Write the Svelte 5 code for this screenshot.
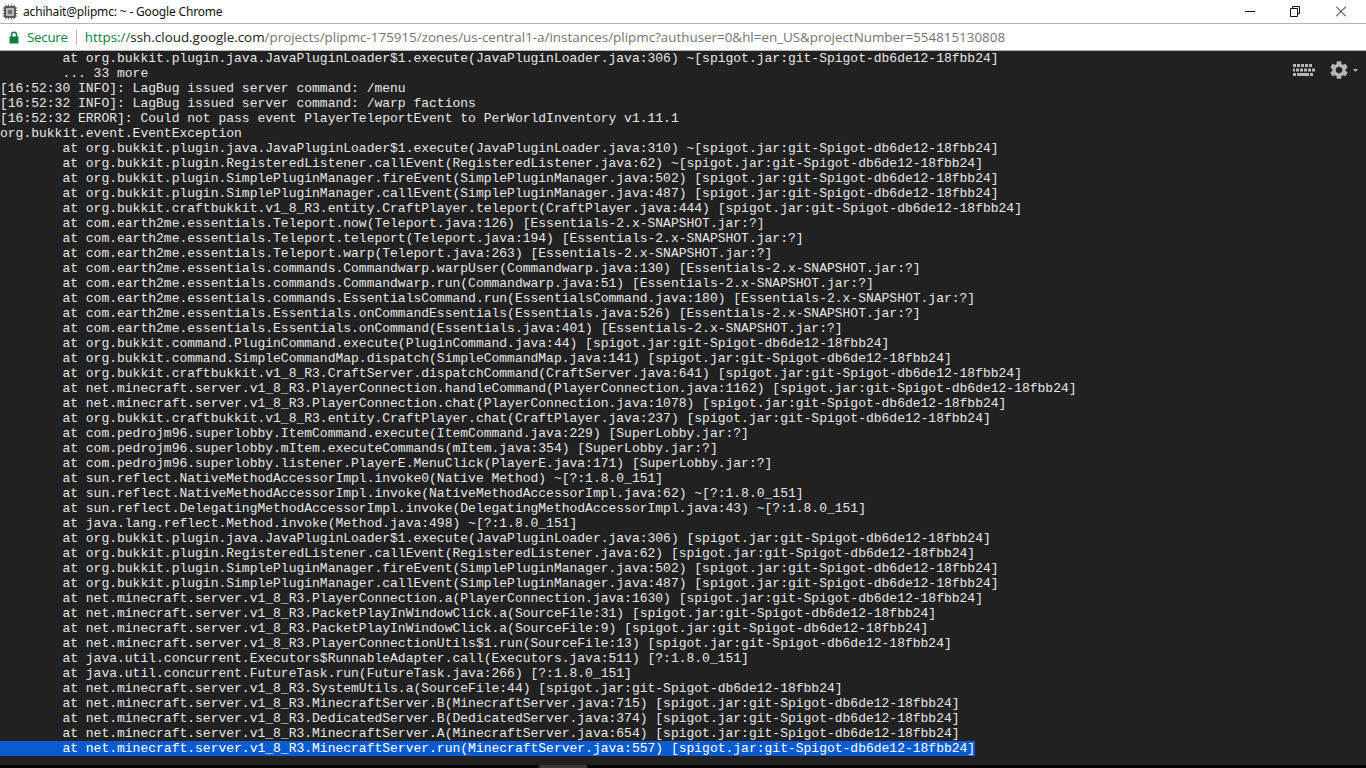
<script>
  const spigot = '[spigot.jar:git-Spigot-db6de12-18fbb24]';
  const ess = '[Essentials-2.x-SNAPSHOT.jar:?]';
  const sl = '[SuperLobby.jar:?]';
  const lines = [
    `        at org.bukkit.plugin.java.JavaPluginLoader$1.execute(JavaPluginLoader.java:306) ~${spigot}`,
    `        ... 33 more`,
    `[16:52:30 INFO]: LagBug issued server command: /menu`,
    `[16:52:32 INFO]: LagBug issued server command: /warp factions`,
    `[16:52:32 ERROR]: Could not pass event PlayerTeleportEvent to PerWorldInventory v1.11.1`,
    `org.bukkit.event.EventException`,
    `        at org.bukkit.plugin.java.JavaPluginLoader$1.execute(JavaPluginLoader.java:310) ~${spigot}`,
    `        at org.bukkit.plugin.RegisteredListener.callEvent(RegisteredListener.java:62) ~${spigot}`,
    `        at org.bukkit.plugin.SimplePluginManager.fireEvent(SimplePluginManager.java:502) ${spigot}`,
    `        at org.bukkit.plugin.SimplePluginManager.callEvent(SimplePluginManager.java:487) ${spigot}`,
    `        at org.bukkit.craftbukkit.v1_8_R3.entity.CraftPlayer.teleport(CraftPlayer.java:444) ${spigot}`,
    `        at com.earth2me.essentials.Teleport.now(Teleport.java:126) ${ess}`,
    `        at com.earth2me.essentials.Teleport.teleport(Teleport.java:194) ${ess}`,
    `        at com.earth2me.essentials.Teleport.warp(Teleport.java:263) ${ess}`,
    `        at com.earth2me.essentials.commands.Commandwarp.warpUser(Commandwarp.java:130) ${ess}`,
    `        at com.earth2me.essentials.commands.Commandwarp.run(Commandwarp.java:51) ${ess}`,
    `        at com.earth2me.essentials.commands.EssentialsCommand.run(EssentialsCommand.java:180) ${ess}`,
    `        at com.earth2me.essentials.Essentials.onCommandEssentials(Essentials.java:526) ${ess}`,
    `        at com.earth2me.essentials.Essentials.onCommand(Essentials.java:401) ${ess}`,
    `        at org.bukkit.command.PluginCommand.execute(PluginCommand.java:44) ${spigot}`,
    `        at org.bukkit.command.SimpleCommandMap.dispatch(SimpleCommandMap.java:141) ${spigot}`,
    `        at org.bukkit.craftbukkit.v1_8_R3.CraftServer.dispatchCommand(CraftServer.java:641) ${spigot}`,
    `        at net.minecraft.server.v1_8_R3.PlayerConnection.handleCommand(PlayerConnection.java:1162) ${spigot}`,
    `        at net.minecraft.server.v1_8_R3.PlayerConnection.chat(PlayerConnection.java:1078) ${spigot}`,
    `        at org.bukkit.craftbukkit.v1_8_R3.entity.CraftPlayer.chat(CraftPlayer.java:237) ${spigot}`,
    `        at com.pedrojm96.superlobby.ItemCommand.execute(ItemCommand.java:229) ${sl}`,
    `        at com.pedrojm96.superlobby.mItem.executeCommands(mItem.java:354) ${sl}`,
    `        at com.pedrojm96.superlobby.listener.PlayerE.MenuClick(PlayerE.java:171) ${sl}`,
    `        at sun.reflect.NativeMethodAccessorImpl.invoke0(Native Method) ~[?:1.8.0_151]`,
    `        at sun.reflect.NativeMethodAccessorImpl.invoke(NativeMethodAccessorImpl.java:62) ~[?:1.8.0_151]`,
    `        at sun.reflect.DelegatingMethodAccessorImpl.invoke(DelegatingMethodAccessorImpl.java:43) ~[?:1.8.0_151]`,
    `        at java.lang.reflect.Method.invoke(Method.java:498) ~[?:1.8.0_151]`,
    `        at org.bukkit.plugin.java.JavaPluginLoader$1.execute(JavaPluginLoader.java:306) ${spigot}`,
    `        at org.bukkit.plugin.RegisteredListener.callEvent(RegisteredListener.java:62) ${spigot}`,
    `        at org.bukkit.plugin.SimplePluginManager.fireEvent(SimplePluginManager.java:502) ${spigot}`,
    `        at org.bukkit.plugin.SimplePluginManager.callEvent(SimplePluginManager.java:487) ${spigot}`,
    `        at net.minecraft.server.v1_8_R3.PlayerConnection.a(PlayerConnection.java:1630) ${spigot}`,
    `        at net.minecraft.server.v1_8_R3.PacketPlayInWindowClick.a(SourceFile:31) ${spigot}`,
    `        at net.minecraft.server.v1_8_R3.PacketPlayInWindowClick.a(SourceFile:9) ${spigot}`,
    `        at net.minecraft.server.v1_8_R3.PlayerConnectionUtils$1.run(SourceFile:13) ${spigot}`,
    `        at java.util.concurrent.Executors$RunnableAdapter.call(Executors.java:511) [?:1.8.0_151]`,
    `        at java.util.concurrent.FutureTask.run(FutureTask.java:266) [?:1.8.0_151]`,
    `        at net.minecraft.server.v1_8_R3.SystemUtils.a(SourceFile:44) ${spigot}`,
    `        at net.minecraft.server.v1_8_R3.MinecraftServer.B(MinecraftServer.java:715) ${spigot}`,
    `        at net.minecraft.server.v1_8_R3.DedicatedServer.B(DedicatedServer.java:374) ${spigot}`,
    `        at net.minecraft.server.v1_8_R3.MinecraftServer.A(MinecraftServer.java:654) ${spigot}`
  ];
  const selected = `        at net.minecraft.server.v1_8_R3.MinecraftServer.run(MinecraftServer.java:557) ${spigot}`;
</script>

<div class="window">
  <header class="titlebar">
    <svg class="favicon" width="16" height="16" viewBox="0 0 16 16" aria-hidden="true">
      <path d="M4 0.5v2M6.5 0.5v2M9.5 0.5v2M12 0.5v2M4 13.5v2M6.5 13.5v2M9.5 13.5v2M12 13.5v2M0.5 4h2M0.5 6.5h2M0.5 9.5h2M0.5 12h2M13.5 4h2M13.5 6.5h2M13.5 9.5h2M13.5 12h2" stroke="#777" fill="none"/>
      <rect x="2" y="2" width="12" height="12" rx="1.5" fill="#5a5a5a"/>
      <rect x="4" y="4" width="8" height="8" fill="#b8b8b8"/>
      <rect x="6" y="6" width="4" height="4" fill="#6e6e6e"/>
    </svg>
    <span class="title">achihait@plipmc: ~ - Google Chrome</span>
    <div class="controls">
      <svg width="10" height="11" viewBox="0 0 10 11" aria-hidden="true"><path d="M0 5.5h10" stroke="#111" fill="none"/></svg>
      <svg width="10" height="11" viewBox="0 0 10 11" aria-hidden="true"><path d="M2.5 2.5V0.5h7v7h-2M0.5 2.5h7v8h-7z" stroke="#111" fill="none"/></svg>
      <svg class="close" width="10" height="11" viewBox="0 0 10 11" aria-hidden="true"><path d="M0 0.5l10 10M10 0.5L0 10.5" stroke="#111" fill="none"/></svg>
    </div>
  </header>
  <div class="urlbar">
    <svg class="lock" width="12" height="13" viewBox="0 0 12 13" aria-hidden="true">
      <path d="M3.5 6V3.8a2.5 2.5 0 0 1 5 0V6" stroke="#0b8043" stroke-width="1.5" fill="none"/>
      <rect x="1.5" y="5.5" width="9" height="7" fill="#0b8043"/>
    </svg>
    <span class="secure">Secure</span>
    <span class="sep"></span>
    <span class="url"><span class="scheme">https://</span><span class="host">ssh.cloud.google.com</span>/projects/plipmc-175915/zones/us-central1-a/instances/plipmc?authuser=0&amp;hl=en_US&amp;projectNumber=554815130808</span>
  </div>
  <main class="terminal">
    <div class="tools">
      <svg class="kbd" width="22" height="12" viewBox="0 0 22 12" aria-hidden="true">
        <g fill="#b5b5b5">
          <rect x="0" y="0" width="3" height="3"/><rect x="4" y="0" width="3" height="3"/><rect x="8" y="0" width="3" height="3"/><rect x="12" y="0" width="3" height="3"/><rect x="16" y="0" width="3" height="3"/>
          <rect x="0" y="4.500" width="2" height="3"/><rect x="3" y="4.500" width="3" height="3"/><rect x="7" y="4.500" width="3" height="3"/><rect x="11" y="4.500" width="3" height="3"/><rect x="15" y="4.500" width="3" height="3"/><rect x="19" y="4.500" width="3" height="3"/>
          <rect x="0" y="9" width="3" height="3"/><rect x="4" y="9" width="12" height="3"/><rect x="17" y="9" width="3" height="3"/>
        </g>
      </svg>
      <svg class="gear" width="22" height="22" viewBox="0 0 24 24" aria-hidden="true">
        <path fill="#b5b5b5" d="M19.14 12.94c.04-.3.06-.61.06-.94 0-.32-.02-.64-.07-.94l2.03-1.58c.18-.14.23-.41.12-.61l-1.92-3.32c-.12-.22-.37-.29-.59-.22l-2.39.96c-.5-.38-1.03-.7-1.62-.94l-.36-2.54c-.04-.24-.24-.41-.48-.41h-3.84c-.24 0-.43.17-.47.41l-.36 2.54c-.59.24-1.13.57-1.62.94l-2.39-.96c-.22-.08-.47 0-.59.22L2.74 8.87c-.12.21-.08.47.12.61l2.03 1.58c-.05.3-.09.63-.09.94s.02.64.07.94l-2.03 1.58c-.18.14-.23.41-.12.61l1.92 3.32c.12.22.37.29.59.22l2.39-.96c.5.38 1.03.7 1.62.94l.36 2.54c.05.24.24.41.48.41h3.84c.24 0 .44-.17.47-.41l.36-2.54c.59-.24 1.13-.56 1.62-.94l2.39.96c.22.08.47 0 .59-.22l1.92-3.32c.12-.22.07-.47-.12-.61l-2.01-1.58zM12 15.6c-1.98 0-3.6-1.62-3.6-3.6s1.62-3.6 3.6-3.6 3.6 1.62 3.6 3.6-1.62 3.6-3.6 3.6z"/>
      </svg>
      <svg class="caret" width="5" height="3" viewBox="0 0 5 3" aria-hidden="true"><path d="M0 0h5L2.500 3z" fill="#b5b5b5"/></svg>
    </div>
    {#each lines as line}
      <div class="row">{line}</div>
    {/each}
    <div class="row"><span class="sel">{selected}</span></div>
  </main>
  <div class="bottom"><span class="thumb"></span></div>
</div>

<style>
  :global(body) { margin: 0; background: #212121; overflow: hidden; }
  .window { width: 1366px; height: 768px; display: flex; flex-direction: column; overflow: hidden; }
  .titlebar { height: 23px; flex: none; display: flex; align-items: center; padding-left: 2px; background: #fff; border-bottom: 1px solid #b4b4b4; color: #111; }
  .favicon { margin-right: 5px; }
  .title { font-family: "Noto Sans", "Open Sans", sans-serif; font-size: 12px; letter-spacing: -0.17px; }
  .controls { margin-left: auto; display: flex; align-items: center; gap: 35px; padding-right: 20px; }
  .close { margin-left: 1px; }
  .urlbar { height: 26px; flex: none; display: flex; align-items: center; background: #fff; border-bottom: 1px solid #b4b4b4; font: 13.4px "Open Sans", "Liberation Sans", sans-serif; padding-left: 8px; }
  .lock { margin-right: 7px; }
  .secure { color: #0b8043; letter-spacing: -0.3px; }
  .sep { width: 1px; height: 16px; background: #bdbdbd; margin: 0 8px 0 8px; }
  .url { color: #757575; white-space: nowrap; }
  .scheme { color: #0b8043; }
  .host { color: #222; }
  .terminal { position: relative; flex: 1; min-height: 0; background: #212121; color: #e8e8e8; font: 13px/15px "Liberation Mono", "Courier New", monospace; }
  .row { height: 15px; white-space: pre; }
  .sel { display: block; width: 975px; background: #0a5bd0; color: #fff; }
  .tools { position: absolute; top: 8px; right: 8px; display: flex; align-items: center; }
  .kbd { margin-right: 13px; }
  .caret { margin-left: 3px; }
  .bottom { height: 3px; flex: none; background: #000; position: relative; }
  .thumb { position: absolute; left: 539px; top: 0; width: 48px; height: 3px; background: #3a3a3a; }
</style>
